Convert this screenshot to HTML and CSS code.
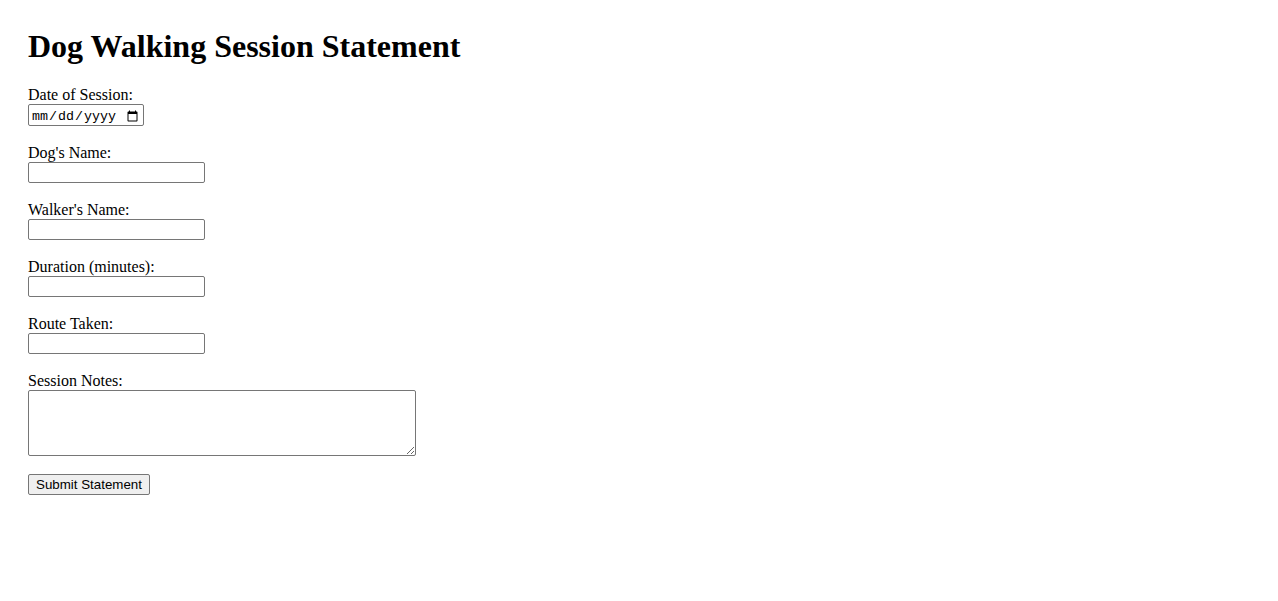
FILE: index.html
```html
<!DOCTYPE html>
<html lang="en">
<head>
<meta charset="utf-8">
<title>Dog Walking Session Statement</title>
<link rel="stylesheet" href="styles.css">
</head>
<body>
<div class="page">
  <h1 class="title">Dog Walking Session Statement</h1>
  <form class="form">
    <div class="field">
      <label class="label" for="date">Date of Session:</label>
      <input class="date-input" type="date" id="date">
    </div>
    <div class="field">
      <label class="label" for="dog">Dog's Name:</label>
      <input class="text-input" type="text" id="dog">
    </div>
    <div class="field">
      <label class="label" for="walker">Walker's Name:</label>
      <input class="text-input" type="text" id="walker">
    </div>
    <div class="field">
      <label class="label" for="duration">Duration (minutes):</label>
      <input class="text-input" type="number" id="duration">
    </div>
    <div class="field">
      <label class="label" for="route">Route Taken:</label>
      <input class="text-input" type="text" id="route">
    </div>
    <div class="field">
      <label class="label" for="notes">Session Notes:</label>
      <textarea class="notes" id="notes" rows="4" cols="50"></textarea>
    </div>
    <button class="submit" type="submit">Submit Statement</button>
  </form>
</div>
</body>
</html>
```
FILE: styles.css
```css
html, body {
  margin: 0;
  padding: 0;
  background: #fff;
}
body {
  font-family: "Liberation Serif", "Times New Roman", serif;
  font-size: 16px;
  color: #000;
}
.page {
  padding: 28px;
}
.title {
  font-size: 32px;
  font-weight: bold;
  margin: 0 0 21px 0;
  line-height: 37px;
}
.form {
  margin: 0;
}
.field {
  margin-bottom: 18px;
}
.label {
  display: block;
  line-height: 18px;
}
.text-input, .date-input, .notes, .submit {
  display: block;
  box-sizing: border-box;
  margin: 0;
  border: 1px solid #767676;
  border-radius: 2px;
  background: #fff;
}
.text-input {
  width: 177px;
  height: 21px;
  padding: 1px 2px;
  font: 13.33px "Liberation Sans", Arial, sans-serif;
}
.text-input::-webkit-inner-spin-button,
.text-input::-webkit-outer-spin-button {
  -webkit-appearance: none;
  margin: 0;
}
.text-input[type=number] {
  -moz-appearance: textfield;
}
.date-input {
  width: 116px;
  height: 22px;
  padding: 3px 2px 0 2px;
  font: 13.33px "Liberation Mono", "Courier New", monospace;
}
.notes {
  width: 388px;
  height: 66px;
  padding: 2px;
  font: 13.33px "Liberation Mono", monospace;
}
.submit {
  height: 21px;
  padding: 1px 7px;
  background: #efefef;
  border-radius: 2px;
  font: 13.33px "Liberation Sans", Arial, sans-serif;
  color: #000;
}
```
